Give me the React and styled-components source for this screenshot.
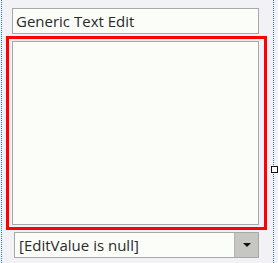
import React from 'react';
import styled, { createGlobalStyle } from 'styled-components';

const GlobalStyle = createGlobalStyle`
  html, body {
    margin: 0;
    padding: 0;
    background: #f2f1f6;
  }
  body {
    font-family: "Open Sans", "Noto Sans", sans-serif;
  }
`;

const Surface = styled.div`
  position: relative;
  box-sizing: border-box;
  margin-left: 1px;
  width: 273px;
  height: 263px;
  border-left: 1px dotted #2f74c0;
  border-right: 1px dotted #2f74c0;
  padding-top: 8px;
  display: flex;
  flex-direction: column;
`;

const Field = styled.div`
  box-sizing: border-box;
  height: 26px;
  border: 1px solid #a8a8a8;
  background: #fbfdf9;
  display: flex;
  align-items: center;
  font-size: 15px;
  color: #2a2a2a;
`;

const TextEdit = styled(Field)`
  margin-left: 10px;
  width: 247px;
  padding-left: 3px;
`;

const RedFrame = styled.div`
  box-sizing: border-box;
  margin: 2px 0 0 4px;
  width: 261px;
  height: 194px;
  border: 3px solid #ff0000;
  padding: 2px 5px 2px 3px;
  display: flex;
`;

const Memo = styled.div`
  flex: 1;
  border: 1px solid #a8a8a8;
  background: #fbfdf9;
`;

const Combo = styled(Field)`
  margin: 2px 0 0 12px;
  width: 245px;
  padding-left: 4px;
`;

const ComboText = styled.span`
  flex: 1;
`;

const DropButton = styled.div`
  width: 23px;
  align-self: stretch;
  background: #c6c6c3;
  border-left: 1px solid #b4b4b0;
  display: flex;
  align-items: center;
  justify-content: center;
`;

const Arrow = styled.div`
  width: 0;
  height: 0;
  border-left: 4px solid transparent;
  border-right: 4px solid transparent;
  border-top: 4px solid #111;
`;

const Handle = styled.div`
  position: absolute;
  left: 269px;
  top: 166px;
  width: 7px;
  height: 7px;
  box-sizing: border-box;
  background: #fff;
  border: 1px solid #111;
`;

export default function App() {
  return (
    <>
      <GlobalStyle />
      <Surface>
        <TextEdit>Generic Text Edit</TextEdit>
        <RedFrame>
          <Memo />
        </RedFrame>
        <Combo>
          <ComboText>[EditValue is null]</ComboText>
          <DropButton>
            <Arrow />
          </DropButton>
        </Combo>
        <Handle />
      </Surface>
    </>
  );
}
